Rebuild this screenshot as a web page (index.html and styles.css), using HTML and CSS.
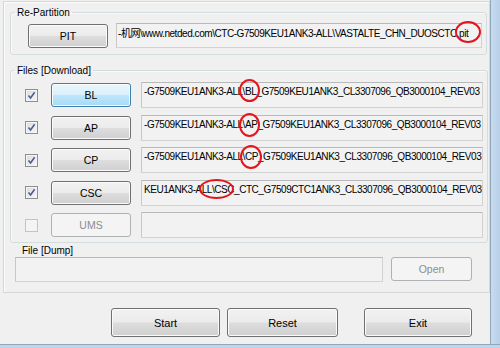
FILE: index.html
```html
<!DOCTYPE html>
<html lang="en">

<head>
    <meta charset="UTF-8">
    <title>Odin</title>
    <link rel="stylesheet" href="styles.css">
</head>

<body>
    <div class="screen">
        <div class="window">
            <div class="client">
                <div class="panel">
                    <!-- Re-Partition -->
                    <fieldset class="group repartition">
                        <legend>Re-Partition</legend>
                        <div class="line">
                            <button class="btn pit">PIT</button>
                            <div class="field top-field">-机网\www.netded.com\CTC-G7509KEU1ANK3-ALL\VASTALTE_CHN_DUOSCTC.pit</div>
                        </div>
                    </fieldset>

                    <!-- Files -->
                    <fieldset class="group files">
                        <legend>Files [Download]</legend>
                        <div class="row">
                            <span class="check on"><svg viewBox="0 0 9 9"><path d="M1.5 4.5 L3.6 7 L7.6 1.2" /></svg></span>
                            <button class="btn slot hover">BL</button>
                            <div class="field">-G7509KEU1ANK3-ALL\BL_G7509KEU1ANK3_CL3307096_QB3000104_REV03</div>
                        </div>
                        <div class="row">
                            <span class="check on"><svg viewBox="0 0 9 9"><path d="M1.5 4.5 L3.6 7 L7.6 1.2" /></svg></span>
                            <button class="btn slot">AP</button>
                            <div class="field">-G7509KEU1ANK3-ALL\AP_G7509KEU1ANK3_CL3307096_QB3000104_REV03</div>
                        </div>
                        <div class="row">
                            <span class="check on"><svg viewBox="0 0 9 9"><path d="M1.5 4.5 L3.6 7 L7.6 1.2" /></svg></span>
                            <button class="btn slot">CP</button>
                            <div class="field">-G7509KEU1ANK3-ALL\CP_G7509KEU1ANK3_CL3307096_QB3000104_REV03</div>
                        </div>
                        <div class="row">
                            <span class="check on"><svg viewBox="0 0 9 9"><path d="M1.5 4.5 L3.6 7 L7.6 1.2" /></svg></span>
                            <button class="btn slot">CSC</button>
                            <div class="field">KEU1ANK3-ALL\CSC_CTC_G7509CTC1ANK3_CL3307096_QB3000104_REV03</div>
                        </div>
                        <div class="row">
                            <span class="check off"></span>
                            <button class="btn slot" disabled>UMS</button>
                            <div class="field"></div>
                        </div>
                    </fieldset>

                    <!-- Dump -->
                    <div class="dump">
                        <div class="dump-label">File [Dump]</div>
                        <div class="line">
                            <div class="field dump-field"></div>
                            <button class="btn open" disabled>Open</button>
                        </div>
                    </div>
                </div>

                <div class="actions">
                    <button class="btn big start">Start</button>
                    <button class="btn big reset">Reset</button>
                    <button class="btn big exit">Exit</button>
                </div>
            </div>
            <div class="frame-right"></div>
        </div>
        <div class="frame-bottom"></div>

        <!-- red marks drawn over the screenshot -->
        <div class="mark m-pit"></div>
        <div class="mark m-bl"></div>
        <div class="mark m-ap"></div>
        <div class="mark m-cp"></div>
        <div class="mark m-csc"></div>
    </div>
</body>

</html>
```

FILE: styles.css
```css
body {
    margin: 0;
    background-color: #f0f0f0;
    font-family: "Liberation Sans", "Noto Sans CJK SC", sans-serif;
    font-size: 10px;
    color: #000;
}

.screen {
    position: relative;
    width: 500px;
    height: 348px;
    overflow: hidden;
}

.window {
    display: flex;
    height: 344px;
}

.client {
    width: 490px;
    background-color: #f0f0f0;
}

.frame-right {
    width: 10px;
    box-sizing: border-box;
    border-left: 1px solid #8fa6bf;
    background: linear-gradient(to right, #c9dbee, #b8cfe7);
}

.frame-bottom {
    height: 4px;
    border-top: 1px solid #8fa6bf;
    background-color: #c2d6eb;
}

.panel {
    box-sizing: border-box;
    margin: 1px 0 0 3px;
    width: 487px;
    height: 292px;
    border: 1px solid #d6d6d6;
    box-shadow: inset 1px 1px 0 #fcfcfc;
    padding: 0 2px 0 6px;
}

.group {
    margin: 0;
    border: 1px solid #d5dcdf;
    border-radius: 3px;
    box-shadow: inset 1px 1px 0 #fafafa;
    padding: 4px 4px 6px 4px;
}

.group legend {
    padding: 0 2px;
    line-height: 13px;
}

.repartition {
    margin-top: 4px;
}

.files {
    margin-top: 9px;
    padding-top: 5px;
    padding-bottom: 4px;
}

.line {
    display: flex;
    align-items: flex-start;
}

.btn {
    box-sizing: border-box;
    font-family: inherit;
    font-size: 10.5px;
    color: #000;
    border: 1px solid #707070;
    border-radius: 3px;
    background: linear-gradient(#f2f2f2 0%, #ebebeb 48%, #dddddd 52%, #cfcfcf 100%);
    box-shadow: inset 0 0 0 1px #fbfbfb;
    padding: 0;
}

.btn.hover {
    border-color: #3c7fb1;
    background: linear-gradient(#eaf6fd 0%, #d9f0fc 48%, #bee6fd 52%, #a7d9f5 100%);
}

.btn:disabled {
    color: #8d8d8d;
    border-color: #adb2b5;
    background: #f4f4f4;
    box-shadow: none;
}

.pit {
    width: 80px;
    height: 24px;
    margin: 1px 0 0 13px;
}

.field {
    box-sizing: border-box;
    flex: 1;
    height: 26px;
    border: 1px solid #d2d2d2;
    border-top-color: #b9b9b9;
    border-left-color: #c8c8c8;
    background-color: #f2f2f2;
    padding: 2px 0 0 2px;
    font-size: 10px;
    letter-spacing: -0.45px;
    line-height: 13px;
    white-space: nowrap;
    overflow: hidden;
}

.top-field {
    margin-left: 8px;
    height: 25px;
    padding-top: 3px;
    padding-left: 1px;
}

.row {
    display: flex;
    align-items: center;
    height: 26px;
    margin-bottom: 6.5px;
}

.row:last-child {
    margin-bottom: 0;
}

.check {
    box-sizing: border-box;
    width: 13px;
    height: 13px;
    margin-left: 10px;
    border: 1px solid #8e8f8f;
    background: linear-gradient(135deg, #dcdcdc, #f7f7f7);
    box-shadow: inset 0 0 0 1px #f4f4f4;
    display: flex;
    align-items: center;
    justify-content: center;
}

.check svg {
    width: 9px;
    height: 9px;
    fill: none;
    stroke: #4a5e94;
    stroke-width: 1.6;
}

.check.off {
    border-color: #c4c4c4;
    background: #f4f4f4;
    box-shadow: none;
}

.slot {
    width: 80px;
    height: 24px;
    margin-left: 13px;
}

.row .field {
    margin-left: 10px;
}

.dump-label {
    padding-left: 12px;
    line-height: 13px;
    margin-top: 1px;
}

.dump .line {
    margin-left: 5px;
}

.dump-field {
    flex: none;
    width: 368px;
    height: 25px;
}

.open {
    width: 81px;
    height: 24px;
    margin-left: 8px;
}

.actions {
    display: flex;
    margin-top: 15px;
    padding-left: 111px;
}

.big {
    height: 29px;
    font-size: 11px;
}

.start {
    width: 109px;
}

.reset {
    width: 111px;
    margin-left: 7px;
}

.exit {
    width: 108px;
    margin-left: 26px;
}

.mark {
    position: absolute;
    box-sizing: border-box;
    border: 2px solid #e3161d;
    border-radius: 50%;
}

.m-pit {
    left: 455px;
    top: 21px;
    width: 26px;
    height: 22px;
}

.m-bl {
    left: 239px;
    top: 79px;
    width: 21px;
    height: 23px;
}

.m-ap {
    left: 239px;
    top: 113px;
    width: 21px;
    height: 24px;
}

.m-cp {
    left: 240px;
    top: 145px;
    width: 22px;
    height: 24px;
}

.m-csc {
    left: 199px;
    top: 179px;
    width: 35px;
    height: 20px;
}
```
